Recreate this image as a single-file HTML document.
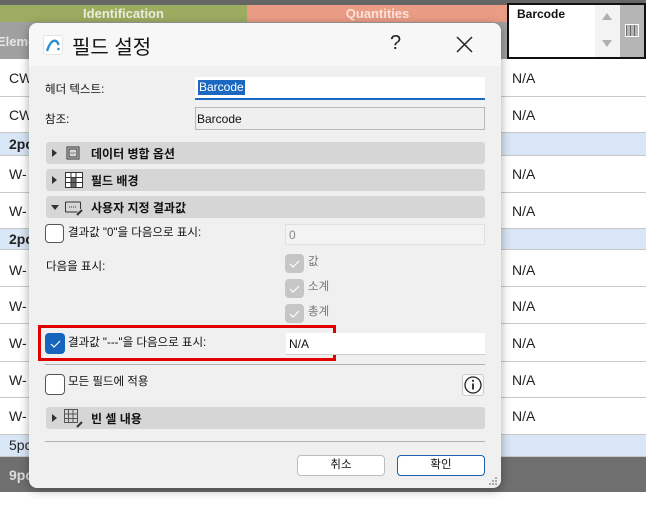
<!DOCTYPE html>
<html><head><meta charset="utf-8"><style>
*{box-sizing:border-box;margin:0;padding:0}
body{width:646px;height:505px;overflow:hidden;background:#fff;position:relative;font-family:"Liberation Sans","Noto Sans CJK KR",sans-serif;font-size:12px;color:#111}
.a{position:absolute}
.row{position:absolute;left:0;width:646px;border-bottom:1px solid #c8c8c8;background:#fff}
.rt{position:absolute;left:9px;font-size:14px;color:#222}
.na{position:absolute;left:512px;font-size:14px;color:#222}
.blue{background:#d9e6f5;border-bottom:1px solid #c8c8c8}
.sec{position:absolute;left:46px;width:439px;height:22px;background:#d6d6d6;border-radius:3px;font-weight:bold;font-size:12px}
.sec .tri{position:absolute;left:6px;top:7px;width:0;height:0;border-top:4px solid transparent;border-bottom:4px solid transparent;border-left:5px solid #333}
.sec .tri.d{left:5px;top:9px;border-left:4px solid transparent;border-right:4px solid transparent;border-top:5px solid #333;border-bottom:0}
.sec span{position:absolute;left:45px;top:3px}
.cb{position:absolute;width:19px;height:19px;border:1px solid #555;border-radius:4px;background:#fff}
.dcb{position:absolute;width:19px;height:19px;border-radius:4px;background:#c6c6c6}
.lbl{position:absolute;font-size:11.5px}
.btn{position:absolute;height:21px;border:1px solid #bdbdbd;border-radius:4px;background:#fff;text-align:center;font-size:11.5px;line-height:19px}
</style></head><body>
<div class="a" style="left:0;top:0;width:646px;height:5px;background:#666"></div>
<div class="a" style="left:0;top:5px;width:247px;height:17px;background:#9cad62;color:#e8eedb;font-weight:bold;font-size:13px;text-align:center;line-height:17px">Identification</div>
<div class="a" style="left:247px;top:5px;width:261px;height:17px;background:#eb9c84;color:#fbe3db;font-weight:bold;font-size:13px;text-align:center;line-height:17px">Quantities</div>
<div class="a" style="left:0;top:22px;width:646px;height:37px;background:#a0a0a0"></div>
<div class="a" style="left:-3px;top:34px;color:#e8e8e8;font-weight:bold;font-size:13px">Eleme</div>
<div class="a" style="left:507px;top:3px;width:139px;height:56px;border:2px solid #111;background:#fff"></div>
<div class="a" style="left:517px;top:7px;font-weight:bold;font-size:12px">Barcode</div>
<div class="a" style="left:595px;top:5px;width:25px;height:52px;background:#f3f3f3"></div>
<div class="a" style="left:602px;top:13px;width:0;height:0;border-left:5px solid transparent;border-right:5px solid transparent;border-bottom:7px solid #b0b0b0"></div>
<div class="a" style="left:602px;top:40px;width:0;height:0;border-left:5px solid transparent;border-right:5px solid transparent;border-top:7px solid #b0b0b0"></div>
<div class="a" style="left:620px;top:5px;width:24px;height:52px;background:#b5b5b5"></div>
<div class="a" style="left:625px;top:24px;width:14px;height:13px;border:1px solid #fff;background:repeating-linear-gradient(90deg,#666 0 1px,transparent 1px 4px)"></div>

<div class="row" style="top:59px;height:38px"><span class="rt" style="top:11px">CW-</span><span class="na" style="top:11px">N/A</span></div>
<div class="row" style="top:97px;height:36px"><span class="rt" style="top:10px">CW-</span><span class="na" style="top:10px">N/A</span></div>
<div class="row blue" style="top:133px;height:23px"><span class="rt" style="top:3px;font-weight:bold">2pc</span></div>
<div class="row" style="top:156px;height:37px"><span class="rt" style="top:10px">W-</span><span class="na" style="top:10px">N/A</span></div>
<div class="row" style="top:193px;height:36px"><span class="rt" style="top:10px">W-</span><span class="na" style="top:10px">N/A</span></div>
<div class="row blue" style="top:229px;height:21px"><span class="rt" style="top:2px;font-weight:bold">2pc</span></div>
<div class="row" style="top:250px;height:37px"><span class="rt" style="top:12px">W-</span><span class="na" style="top:12px">N/A</span></div>
<div class="row" style="top:287px;height:37px"><span class="rt" style="top:11px">W-</span><span class="na" style="top:11px">N/A</span></div>
<div class="row" style="top:324px;height:38px"><span class="rt" style="top:11px">W-</span><span class="na" style="top:11px">N/A</span></div>
<div class="row" style="top:362px;height:36px"><span class="rt" style="top:10px">W-</span><span class="na" style="top:10px">N/A</span></div>
<div class="row" style="top:398px;height:37px"><span class="rt" style="top:10px">W-</span><span class="na" style="top:10px">N/A</span></div>
<div class="row blue" style="top:435px;height:22px"><span class="rt" style="top:2px">5pc</span></div>
<div class="a" style="left:0;top:457px;width:646px;height:35px;background:#6f6f6f"></div>
<div class="a" style="left:9px;top:467px;color:#ddd;font-weight:bold;font-size:14px">9pc</div>

<div class="a" style="left:29px;top:23px;width:472px;height:465px;background:#f0f0f0;border-radius:8px;box-shadow:0 2px 10px rgba(0,0,0,.35);overflow:hidden">
<div class="a" style="left:0;top:0;width:472px;height:43px;background:#f7f7f7"></div>
</div>
<div class="a" style="left:43px;top:35px;width:20px;height:20px;background:#fff;border-radius:3px;border:1px solid #e4e4e4"></div>
<svg class="a" style="left:43px;top:35px" width="20" height="20"><path d="M4 16 Q8 4 13 6 Q15 7 15.5 10" fill="none" stroke="#2a90d0" stroke-width="2.4"/><circle cx="15.5" cy="14" r="1.3" fill="#2a90d0"/></svg>
<div class="a" style="left:72px;top:31px;font-size:20px">필드 설정</div>
<div class="a" style="left:390px;top:32px;font-size:20px;color:#222">?</div>
<svg class="a" style="left:456px;top:36px" width="17" height="17"><path d="M1 1L16 16M16 1L1 16" stroke="#222" stroke-width="1.5"/></svg>

<div class="lbl" style="left:45px;top:81px">헤더 텍스트:</div>
<div class="a" style="left:195px;top:77px;width:290px;height:23px;background:#fff;border-bottom:2px solid #1a68c0"></div>
<div class="a" style="left:198px;top:80px;background:#1a68c0;color:#fff;font-size:12px;padding:0 1px;line-height:15px">Barcode</div>
<div class="lbl" style="left:45px;top:111px">참조:</div>
<div class="a" style="left:195px;top:107px;width:290px;height:23px;background:#efefef;border:1px solid #b8b8b8;padding:4px 1px;font-size:12px">Barcode</div>

<div class="sec" style="top:142px"><i class="tri"></i>
<svg class="a" style="left:20px;top:4px" width="14" height="14"><rect x="1" y="1" width="12" height="12" fill="none" stroke="#333"/><rect x="3" y="3" width="8" height="8" fill="none" stroke="#333"/><path d="M4.5 7h5" stroke="#333" stroke-dasharray="1 1"/></svg><span>데이터 병합 옵션</span></div>
<div class="sec" style="top:169px"><i class="tri"></i>
<svg class="a" style="left:19px;top:3px" width="18" height="16"><rect x="0.5" y="0.5" width="17" height="15" fill="#fff" stroke="#333"/><rect x="6" y="6" width="5" height="9" fill="#666"/><path d="M6 0v16M11 0v16M0 5.5h18M0 10.5h18" stroke="#333"/></svg><span>필드 배경</span></div>
<div class="sec" style="top:196px"><i class="tri d"></i>
<svg class="a" style="left:19px;top:3px" width="18" height="17"><path d="M0.5 3h15M0.5 13h12M0.5 3v10M15.5 3v7" stroke="#333" fill="none"/><path d="M4 8h7" stroke="#333" stroke-dasharray="1 1"/><path d="M12 16l5-5" stroke="#333" stroke-width="2"/></svg><span>사용자 지정 결과값</span></div>

<div class="cb" style="left:45px;top:224px"></div>
<div class="lbl" style="left:68px;top:224px">결과값 "0"을 다음으로 표시:</div>
<div class="a" style="left:285px;top:224px;width:200px;height:21px;border:1px solid #e0e0e0;background:#f3f3f3;color:#888;padding:3px 3px;font-size:12px">0</div>
<div class="lbl" style="left:46px;top:258px">다음을 표시:</div>
<div class="dcb" style="left:285px;top:254px"></div><div class="lbl" style="left:308px;top:253px;color:#777">값</div>
<div class="dcb" style="left:285px;top:279px"></div><div class="lbl" style="left:308px;top:278px;color:#777">소계</div>
<div class="dcb" style="left:285px;top:304px"></div><div class="lbl" style="left:308px;top:303px;color:#777">총계</div>
<svg class="a" style="left:285px;top:254px" width="19" height="70"><path d="M5 10l3 3 6-6M5 35l3 3 6-6M5 60l3 3 6-6" stroke="#fff" fill="none" stroke-width="1.2"/></svg>

<div class="a" style="left:38px;top:325px;width:298px;height:36px;border:3px solid #e00000"></div>
<div class="a" style="left:45px;top:333px;width:20px;height:21px;background:#1664bb;border-radius:4px"></div>
<svg class="a" style="left:45px;top:333px" width="20" height="21"><path d="M6 11l3 3 6-6" stroke="#fff" fill="none" stroke-width="1.2"/></svg>
<div class="lbl" style="left:68px;top:334px">결과값 "---"을 다음으로 표시:</div>
<div class="a" style="left:286px;top:333px;width:199px;height:22px;background:#fff;border-bottom:1px solid #d0d0d0;padding:4px 3px;font-size:12px">N/A</div>
<div class="a" style="left:45px;top:364px;width:440px;height:1px;background:#b0b0b0"></div>

<div class="cb" style="left:45px;top:374px;width:20px;height:21px"></div>
<div class="lbl" style="left:68px;top:373px">모든 필드에 적용</div>
<div class="a" style="left:462px;top:374px;width:22px;height:22px;border:1px solid #ccc;border-radius:3px;background:#fafafa"></div>
<svg class="a" style="left:463px;top:375px" width="20" height="20"><circle cx="10" cy="10" r="8" fill="none" stroke="#222" stroke-width="1.3"/><circle cx="10" cy="5.8" r="1.1" fill="#222"/><path d="M10 8.5v6" stroke="#222" stroke-width="1.8"/></svg>

<div class="sec" style="top:407px"><i class="tri"></i>
<svg class="a" style="left:18px;top:2px" width="20" height="19"><rect x="0.5" y="0.5" width="13" height="13" fill="none" stroke="#555"/><path d="M4.5 0v14M9 0v14M0 5h14M0 9.5h14" stroke="#555"/><path d="M13 18l5-5" stroke="#333" stroke-width="2"/></svg><span>빈 셀 내용</span></div>
<div class="a" style="left:45px;top:441px;width:440px;height:1px;background:#b0b0b0"></div>

<div class="btn" style="left:297px;top:455px;width:88px">취소</div>
<div class="btn" style="left:397px;top:455px;width:88px;border-color:#1a5fb0">확인</div>
<svg class="a" style="left:488px;top:476px" width="10" height="10"><g fill="#aaa"><rect x="7" y="1" width="2" height="2"/><rect x="4" y="4" width="2" height="2"/><rect x="7" y="4" width="2" height="2"/><rect x="1" y="7" width="2" height="2"/><rect x="4" y="7" width="2" height="2"/><rect x="7" y="7" width="2" height="2"/></g></svg>
</body></html>
